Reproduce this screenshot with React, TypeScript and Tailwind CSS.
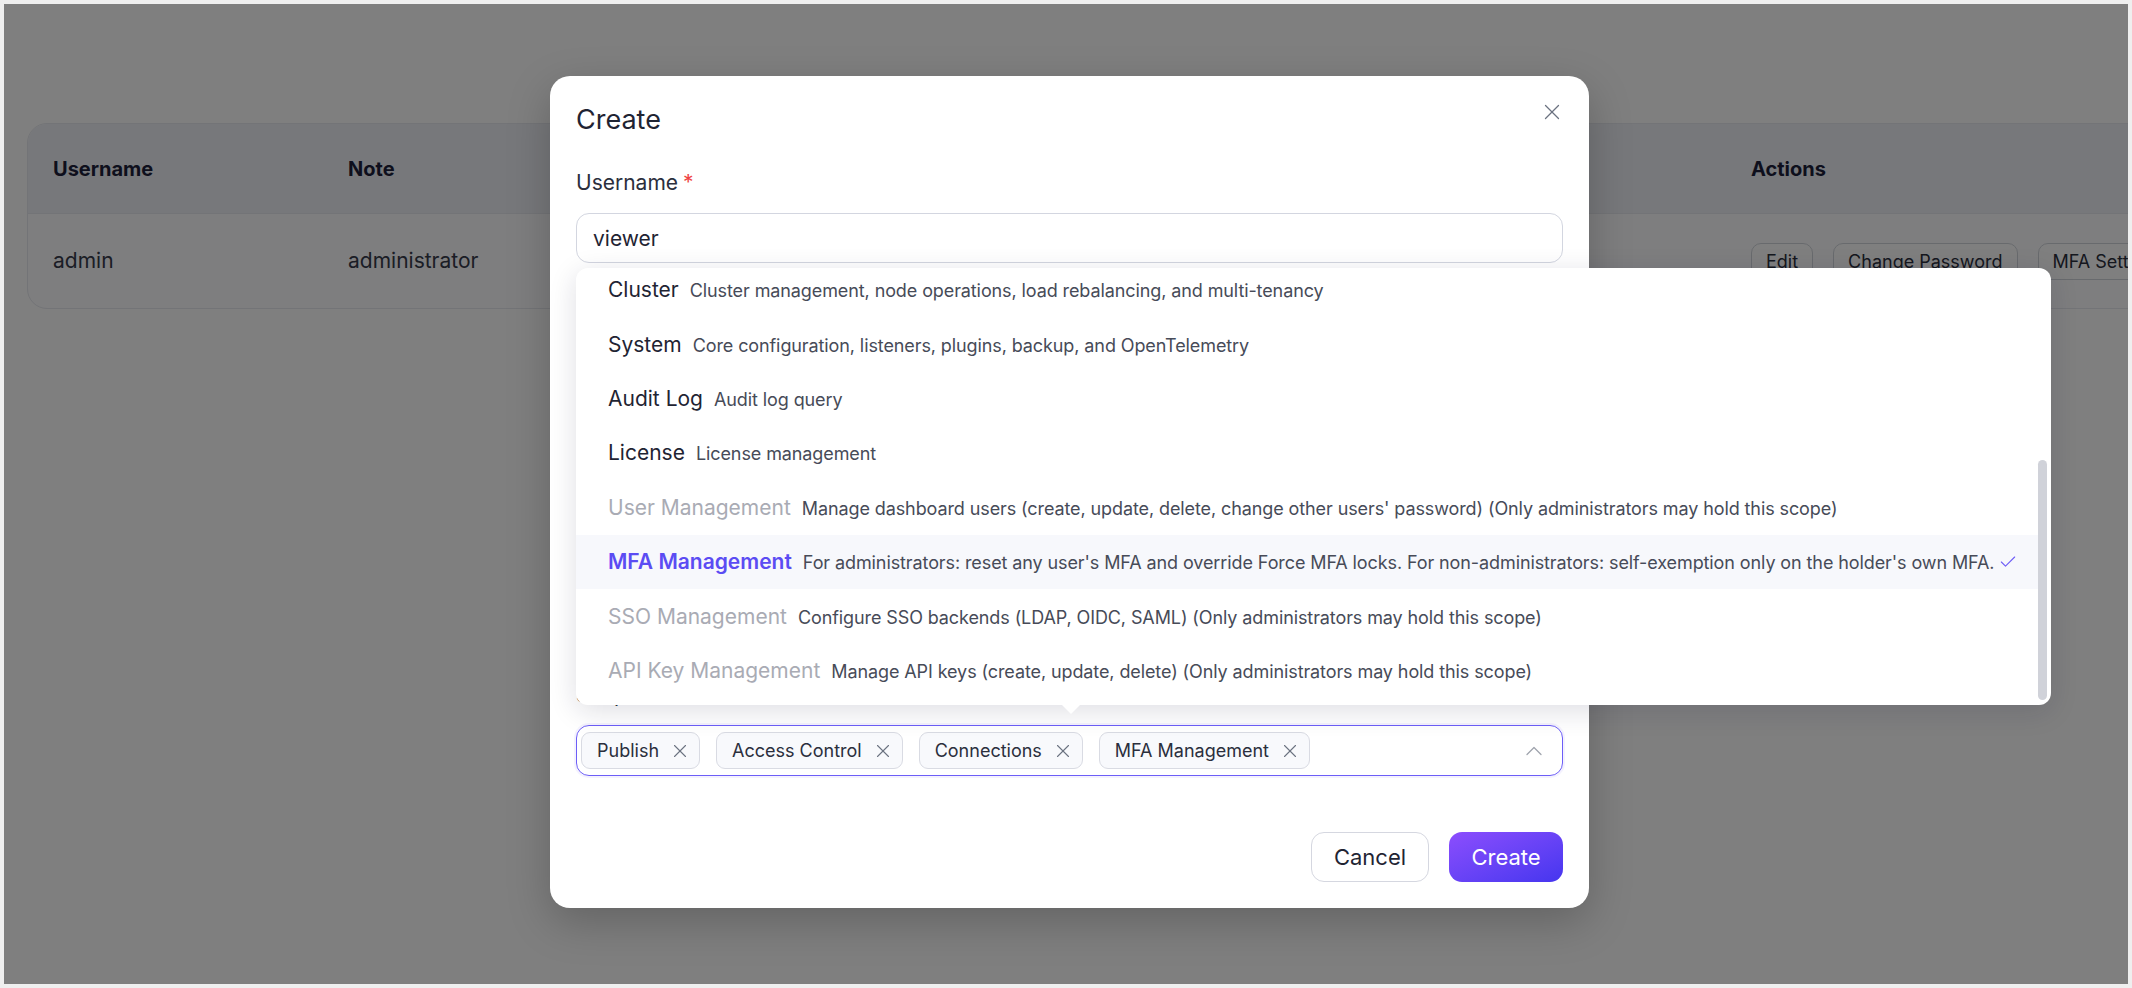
import { Check, ChevronUp, X } from "lucide-react";

type Scope = {
  name: string;
  desc: string;
  disabled?: boolean;
  selected?: boolean;
  active?: boolean;
};

const scopes: Scope[] = [
  { name: "Publish", desc: "Publish messages to topics", selected: true },
  { name: "Subscribe", desc: "Subscribe to topics and receive messages" },
  { name: "Access Control", desc: "Authentication, authorization and banned clients", selected: true },
  { name: "Connections", desc: "View and kick client connections", selected: true },
  { name: "Monitoring", desc: "Metrics, alarms and slow subscriptions" },
  { name: "Rule Engine", desc: "Rules, actions, connectors and schemas" },
  { name: "Cluster", desc: "Cluster management, node operations, load rebalancing, and multi-tenancy" },
  { name: "System", desc: "Core configuration, listeners, plugins, backup, and OpenTelemetry" },
  { name: "Audit Log", desc: "Audit log query" },
  { name: "License", desc: "License management" },
  {
    name: "User Management",
    desc: "Manage dashboard users (create, update, delete, change other users' password) (Only administrators may hold this scope)",
    disabled: true,
  },
  {
    name: "MFA Management",
    desc: "For administrators: reset any user's MFA and override Force MFA locks. For non-administrators: self-exemption only on the holder's own MFA.",
    selected: true,
    active: true,
  },
  {
    name: "SSO Management",
    desc: "Configure SSO backends (LDAP, OIDC, SAML) (Only administrators may hold this scope)",
    disabled: true,
  },
  {
    name: "API Key Management",
    desc: "Manage API keys (create, update, delete) (Only administrators may hold this scope)",
    disabled: true,
  },
];

const selectedTags = ["Publish", "Access Control", "Connections", "MFA Management"];

function Field({ label, required, value }: { label: string; required?: boolean; value?: string }) {
  return (
    <div className="flex flex-col gap-[15px]">
      <label className="text-[21px] leading-[30px] text-[#2b2f3d]">
        {label}
        {required && <span className="ml-[5px] text-[#ef4444]">*</span>}
      </label>
      <input
        readOnly
        value={value ?? ""}
        className="h-[50px] rounded-[13px] border border-[#d3d6e0] bg-white px-[16px] text-[21px] text-[#1f2433] outline-none"
      />
    </div>
  );
}

function UsersTable() {
  return (
    <div className="ml-[23px] mt-[119px] w-[2200px] overflow-hidden rounded-[20px] border border-[#e6e8ee] bg-[#fcfcfe]">
      <div className="flex h-[89px] items-center bg-[#eef0f6] pl-[25px] text-[20px] font-bold text-[#1c1f3a]">
        <div className="w-[295px] shrink-0">Username</div>
        <div className="w-[1403px] shrink-0">Note</div>
        <div className="shrink-0">Actions</div>
      </div>
      <div className="flex h-[95px] items-center border-t border-[#e6e8ee] pl-[25px] text-[21px] text-[#363a4a]">
        <div className="w-[295px] shrink-0">admin</div>
        <div className="w-[1403px] shrink-0">administrator</div>
        <div className="flex shrink-0 gap-[20px] whitespace-nowrap text-[18px]">
          {["Edit", "Change Password", "MFA Settings", "Delete"].map((b) => (
            <button key={b} className="h-[37px] rounded-[10px] border border-[#d1d5db] bg-white px-[14px] text-[#2b2f3d]">
              {b}
            </button>
          ))}
        </div>
      </div>
    </div>
  );
}

function ScopeDropdown() {
  return (
    <div className="absolute left-[572px] top-[264px] h-[437px] w-[1475px] rounded-[12px] bg-white shadow-[0_6px_28px_rgba(20,24,60,0.14)]">
      <div className="flex h-full flex-col justify-end overflow-hidden rounded-[12px] pb-[7px] pr-[13px]">
        {scopes.map((s) => (
          <div
            key={s.name}
            className={`flex h-[54.4px] shrink-0 items-center justify-between pl-[32px] pr-[20px] ${s.active ? "bg-[#f7f8fc]" : ""}`}
          >
            <div className="flex items-baseline gap-[11px] whitespace-nowrap">
              <span
                className={`text-[21px] ${
                  s.disabled
                    ? "text-[#a9abb4]"
                    : s.selected
                      ? "font-semibold text-[#5b4cf3]"
                      : "text-[#1f2433]"
                }`}
              >
                {s.name}
              </span>
              <span className="text-[18px] tracking-[-0.1px] text-[#474b58]">{s.desc}</span>
            </div>
            {s.selected && <Check size={20} strokeWidth={1.3} className="shrink-0 text-[#6d5cf6]" />}
          </div>
        ))}
      </div>
      {/* scrollbar thumb */}
      <div className="absolute bottom-[5px] right-[4px] h-[240px] w-[9px] rounded-full bg-[#d0d2d9]" />
      {/* arrow pointing at the select */}
      <div className="absolute -bottom-[9px] left-[486px] h-0 w-0 border-x-[9px] border-t-[9px] border-x-transparent border-t-white" />
    </div>
  );
}

function CreateModal() {
  return (
    <div className="absolute left-[546px] top-[72px] w-[1039px] rounded-[20px] bg-white p-[26px] shadow-[0_14px_44px_rgba(0,0,0,0.22)]">
      <button className="absolute right-[24px] top-[23px] text-[#6b7280]">
        <X size={26} strokeWidth={1.2} />
      </button>
      <h2 className="text-[27px] leading-[36px] text-[#1f2433]">Create</h2>

      <div className="mt-[30px] flex flex-col gap-[33px]">
        <Field label="Username" required value="viewer" />
        <Field label="Password" required />
        <Field label="Confirm Password" required />
        <Field label="Note" />

        <div className="flex flex-col gap-[15px]">
          <label className="text-[21px] leading-[30px] text-[#2b2f3d]">
            Scopes<span className="ml-[5px] text-[#ef4444]">*</span>
          </label>
          <div className="flex h-[51px] items-center justify-between rounded-[13px] border-[1.5px] border-[#6d5ef7] pl-[4px] pr-[14px] shadow-[0_0_0_2px_rgba(109,94,247,0.08)]">
            <div className="flex items-center gap-[16px]">
              {selectedTags.map((t) => (
                <span
                  key={t}
                  className="flex h-[37px] items-center gap-[10px] rounded-[9px] border border-[#d9dbe3] bg-[#f8f9fc] pl-[15px] pr-[8px] text-[18px] text-[#2b2f3d]"
                >
                  {t}
                  <X size={22} strokeWidth={1.2} className="text-[#6b7280]" />
                </span>
              ))}
            </div>
            <ChevronUp size={28} strokeWidth={1.1} className="text-[#a0a4ae]" />
          </div>
        </div>
      </div>

      <div className="mt-[56px] flex justify-end gap-[20px]">
        <button className="h-[50px] w-[118px] rounded-[13px] border border-[#d5d7e0] bg-white text-[22px] text-[#1f2433]">
          Cancel
        </button>
        <button className="h-[50px] w-[114px] rounded-[13px] bg-gradient-to-br from-[#8c4dfd] to-[#4535ef] text-[22px] text-white">
          Create
        </button>
      </div>
    </div>
  );
}

export default function App() {
  return (
    <div className="h-[988px] w-[2132px] bg-[#efefef] p-[4px] font-['Inter',sans-serif]">
      <div className="relative h-full w-full overflow-hidden bg-white">
        <UsersTable />
        <div className="absolute inset-0 bg-black/50" />
        <CreateModal />
        <ScopeDropdown />
      </div>
    </div>
  );
}
